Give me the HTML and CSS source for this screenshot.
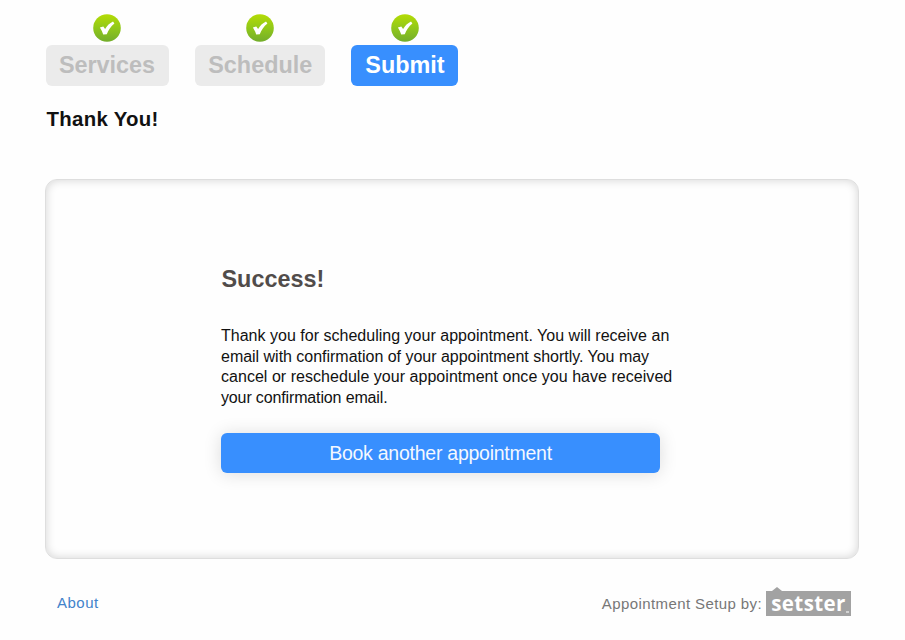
FILE: index.html
```html
<!DOCTYPE html>
<html lang="en">
<head>
<meta charset="utf-8">
<title>Thank You!</title>
<link rel="stylesheet" href="styles.css">
</head>
<body>
<svg class="defs" width="0" height="0" aria-hidden="true">
  <defs>
    <linearGradient id="green" x1="0" y1="0" x2="0" y2="1">
      <stop offset="0" stop-color="#b4dc05"/>
      <stop offset="0.5" stop-color="#91c81a"/>
      <stop offset="1" stop-color="#73ad2b"/>
    </linearGradient>
    <symbol id="check" viewBox="0 0 28 28">
      <circle cx="14" cy="14" r="13.8" fill="url(#green)"/>
      <path d="M6.9 13.4l3.4-.9 1.8 2.6c1.9-3.4 4.6-6 7.9-7.6l1.4 2c-3.6 3-6.1 6.6-7.6 10.7l-3.6.2c-.7-2.4-1.8-4.7-3.3-7z" fill="#fff"/>
    </symbol>
  </defs>
</svg>
<main class="page">
  <nav class="steps">
    <div class="step"><svg class="tick"><use href="#check"/></svg><span class="tab services">Services</span></div>
    <div class="step"><svg class="tick"><use href="#check"/></svg><span class="tab schedule">Schedule</span></div>
    <div class="step"><svg class="tick"><use href="#check"/></svg><span class="tab submit">Submit</span></div>
  </nav>
  <h1 class="title">Thank You!</h1>
  <section class="panel">
    <h2 class="heading">Success!</h2>
    <p class="message"><span class="l1">Thank you for scheduling your appointment. You will receive an</span><br><span class="l2">email with confirmation of your appointment shortly. You may</span><br><span class="l3">cancel or reschedule your appointment once you have received</span><br><span class="l4">your confirmation email.</span></p>
    <a class="button">Book another appointment</a>
  </section>
  <footer class="footer">
    <a class="about">About</a>
    <span class="credit">Appointment Setup by:</span>
    <span class="logo">setster<i class="dot"></i></span>
  </footer>
</main>
</body>
</html>
```
FILE: styles.css
```css
* { box-sizing: border-box; }
body {
  margin: 0;
  background: #fefefe;
  font-family: "Liberation Sans", Arial, sans-serif;
}
.defs { display: block; height: 0; }
.page { width: 814px; margin-left: 45px; padding-top: 14px; }
.steps { display: flex; gap: 26px; margin-left: 0.5px; }
.step { display: flex; flex-direction: column; align-items: center; }
.tick { display: block; width: 28px; height: 28px; margin-bottom: 3px; }
.tab {
  height: 41px;
  border-radius: 6px;
  background: #ebebeb;
  color: #bdbdbd;
  font-size: 23.4px;
  font-weight: bold;
  line-height: 40px;
  text-align: center;
}
.services { width: 123px; }
.schedule { width: 130.5px; padding-left: 1px; }
.submit { width: 107px; padding-left: 1px; background: #388ffe; color: #fff; }
.title {
  margin: 21px 0 0 1.5px;
  color: #111;
  font-size: 20.4px;
  line-height: 25px;
  letter-spacing: 0.3px;
}
.panel {
  height: 380px;
  margin-top: 47px;
  padding: 85px 0 0 175px;
  border: 1px solid #dedede;
  border-radius: 12px;
  box-shadow: inset 0 0 10px #d4d4d4;
}
.heading {
  margin: 0 0 0 0.5px;
  color: #514c4a;
  font-size: 23.4px;
  line-height: 28px;
}
.message {
  margin: 33px 0 0;
  color: #111;
  font-size: 16px;
  line-height: 20.6px;
  white-space: nowrap;
}
.l1 { letter-spacing: 0.015px; }
.l2 { letter-spacing: -0.02px; }
.l3 { letter-spacing: 0.035px; }
.l4 { letter-spacing: -0.14px; }
.button {
  display: block;
  width: 439px;
  height: 40px;
  margin-top: 25px;
  border-radius: 6px;
  background: #388ffe;
  box-shadow: 0 1px 18px #ddd;
  color: #f4f8ff;
  font-size: 19.5px;
  line-height: 40px;
  letter-spacing: -0.25px;
  text-align: center;
}
.footer { display: flex; align-items: center; height: 28px; margin-top: 31px; }
.about { margin: -3px 0 0 12px; color: #4283cb; font-size: 15px; line-height: 16px; letter-spacing: 0.5px; }
.credit { margin-left: auto; color: #777; font-size: 15px; line-height: 16px; letter-spacing: 0.4px; }
.logo {
  position: relative;
  width: 85px;
  height: 25px;
  margin: -1px 8px 0 4px;
  background: #a2a2a2;
  color: #fff;
  font-family: "Open Sans", "Noto Sans", sans-serif;
  font-size: 20.5px;
  font-weight: bold;
  letter-spacing: 0.4px;
  line-height: 24px;
  text-align: center;
}
.logo::before {
  content: "";
  position: absolute;
  left: 6px;
  top: -4px;
  border: 5px solid transparent;
  border-top: 0;
  border-bottom: 4px solid #a2a2a2;
}
.dot { position: absolute; right: 2px; bottom: 3px; width: 3px; height: 2px; background: #d2d2d2; }
```
